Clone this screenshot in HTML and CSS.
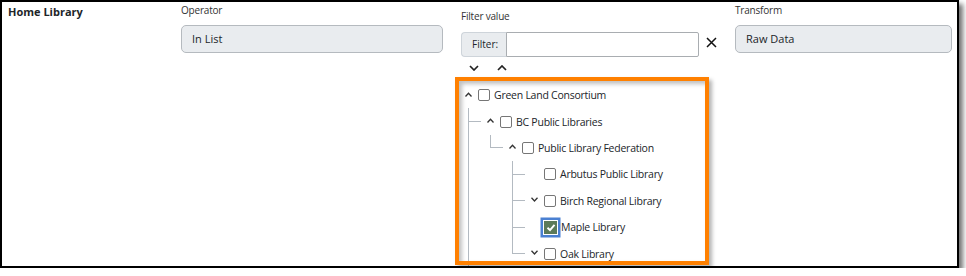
FILE: index.html
```html
<!DOCTYPE html>
<html lang="en">
<head>
  <meta charset="UTF-8">
  <title>Home Library filter</title>
  <link rel="stylesheet" href="styles.css">
</head>
<body>
  <div class="frame">
    <!-- Field name -->
    <div class="field-name">Home Library</div>

    <!-- Operator -->
    <div class="col col-operator">
      <div class="col-label">Operator</div>
      <div class="readonly-box">In List</div>
    </div>

    <!-- Filter value -->
    <div class="col col-filter">
      <div class="col-label">Filter value</div>
      <div class="filter-row">
        <div class="input-group">
          <span class="addon">Filter:</span>
          <input type="text" class="filter-input">
        </div>
        <svg class="clear-icon" width="11" height="11" viewBox="0 0 11 11">
          <path d="M1 1 L10 10 M10 1 L1 10" stroke="#111" stroke-width="1.5" fill="none"/>
        </svg>
      </div>
      <div class="expand-row">
        <svg width="10" height="6" viewBox="0 0 10 6"><polyline points="1,1 5,5 9,1" fill="none" stroke="#222" stroke-width="1.7"/></svg>
        <svg width="10" height="6" viewBox="0 0 10 6"><polyline points="1,5 5,1 9,5" fill="none" stroke="#222" stroke-width="1.7"/></svg>
      </div>

      <ul class="tree">
        <li class="root">
          <div class="node">
            <span class="toggle"><svg width="7" height="5" viewBox="0 0 7 5"><polyline points="0.5,4.5 3.5,1.2 6.5,4.5" fill="none" stroke="#333" stroke-width="1.3"/></svg></span>
            <span class="check"></span>
            <span class="name">Green Land Consortium</span>
          </div>
          <ul class="level-1">
            <li>
              <div class="node">
                <span class="toggle"><svg width="7" height="5" viewBox="0 0 7 5"><polyline points="0.5,4.5 3.5,1.2 6.5,4.5" fill="none" stroke="#333" stroke-width="1.3"/></svg></span>
                <span class="check"></span>
                <span class="name">BC Public Libraries</span>
              </div>
              <ul>
                <li class="last">
                  <div class="node">
                    <span class="toggle"><svg width="7" height="5" viewBox="0 0 7 5"><polyline points="0.5,4.5 3.5,1.2 6.5,4.5" fill="none" stroke="#333" stroke-width="1.3"/></svg></span>
                    <span class="check"></span>
                    <span class="name">Public Library Federation</span>
                  </div>
                  <ul>
                    <li>
                      <div class="node">
                        <span class="toggle"></span>
                        <span class="check"></span>
                        <span class="name">Arbutus Public Library</span>
                      </div>
                    </li>
                    <li>
                      <div class="node">
                        <span class="toggle"><svg width="7" height="5" viewBox="0 0 7 5"><polyline points="0.5,0.8 3.5,4 6.5,0.8" fill="none" stroke="#333" stroke-width="1.3"/></svg></span>
                        <span class="check"></span>
                        <span class="name">Birch Regional Library</span>
                      </div>
                    </li>
                    <li>
                      <div class="node">
                        <span class="toggle"></span>
                        <span class="check checked">
                          <svg width="10" height="9" viewBox="0 0 10 9"><polyline points="1.5,4.8 4,7.2 8.5,1.8" fill="none" stroke="#fff" stroke-width="1.9"/></svg>
                        </span>
                        <span class="name">Maple Library</span>
                      </div>
                    </li>
                    <li class="last">
                      <div class="node">
                        <span class="toggle"><svg width="7" height="5" viewBox="0 0 7 5"><polyline points="0.5,0.8 3.5,4 6.5,0.8" fill="none" stroke="#333" stroke-width="1.3"/></svg></span>
                        <span class="check"></span>
                        <span class="name">Oak Library</span>
                      </div>
                    </li>
                  </ul>
                </li>
              </ul>
            </li>
          </ul>
        </li>
      </ul>
    </div>

    <!-- Transform -->
    <div class="col col-transform">
      <div class="col-label">Transform</div>
      <div class="readonly-box">Raw Data</div>
    </div>

    <!-- Highlight annotation -->
    <div class="highlight"></div>
  </div>
</body>
</html>
```

FILE: styles.css
```css
body {
  margin: 0;
  background-color: #fff;
  font-family: 'Open Sans', 'Noto Sans', sans-serif;
  color: #212529;
}

.frame {
  position: relative;
  box-sizing: border-box;
  width: 959px;
  height: 268px;
  border: 2px solid #000;
  background-color: #fff;
  box-shadow: 4px 4px 5px rgba(0, 0, 0, 0.55);
  display: flex;
  overflow: hidden;
}

.field-name {
  width: 179px;
  flex-shrink: 0;
  box-sizing: border-box;
  padding: 2px 0 0 6px;
  font-size: 11px;
  font-weight: 700;
  line-height: 16px;
}

.col {
  flex-shrink: 0;
  margin-right: 18px;
}

.col-label {
  font-size: 10px;
  letter-spacing: -0.2px;
  line-height: 16px;
  color: #333;
}

.col-operator {
  width: 262px;
}

.col-filter {
  width: 256px;
  padding-top: 6px;
}

.col-transform {
  width: 217px;
}

.readonly-box {
  box-sizing: border-box;
  height: 28px;
  margin-top: 7px;
  padding: 0 10px;
  background-color: #e9ecef;
  border: 1px solid #b5babf;
  border-radius: 5px;
  font-size: 11px;
  line-height: 26px;
}

/* Filter input */
.filter-row {
  display: flex;
  align-items: center;
  margin-top: 8px;
}

.input-group {
  display: flex;
  height: 25px;
  width: 238px;
  flex-shrink: 0;
}

.addon {
  flex-shrink: 0;
  box-sizing: border-box;
  width: 45px;
  padding-left: 10px;
  background-color: #e9ecef;
  border: 1px solid #ced4da;
  border-right: none;
  border-radius: 4px 0 0 4px;
  font-size: 10px;
  line-height: 23px;
}

.filter-input {
  flex: 1;
  min-width: 0;
  box-sizing: border-box;
  height: 25px;
  margin: 0;
  border: 1px solid #a9adb1;
  border-radius: 0 2px 2px 0;
  padding: 0 4px;
  font: inherit;
}

.clear-icon {
  margin: -4px 0 0 7px;
}

.expand-row {
  display: flex;
  gap: 18px;
  height: 10px;
  align-items: center;
  margin: 6px 0 0 8px;
}

/* Tree */
.tree,
.tree ul {
  list-style: none;
  margin: 0;
  padding: 0;
}

.tree {
  margin-top: 9px;
  padding-left: 3px;
  font-size: 10.5px;
  letter-spacing: -0.25px;
}

.tree ul {
  margin-left: 21px;
}

.tree ul.level-1 {
  margin-left: 4px;
}

.tree ul li {
  border-left: 1px solid #b3bac1;
}

.tree ul li.last {
  border-left-color: transparent;
}

.node {
  display: flex;
  align-items: center;
  height: 26.4px;
  white-space: nowrap;
}

.tree ul .node::before {
  content: "";
  width: 12px;
  height: 0;
  border-top: 1px solid #b3bac1;
  margin-right: 5px;
}

.tree ul li.last > .node::before {
  align-self: flex-start;
  height: 12.2px;
  border-top: none;
  border-left: 1px solid #b3bac1;
  border-bottom: 1px solid #b3bac1;
  margin-left: -1px;
}

.toggle {
  width: 9px;
  margin-right: 5px;
  display: flex;
  justify-content: center;
  align-items: center;
  margin-top: -2px;
}

.check {
  box-sizing: border-box;
  width: 12px;
  height: 12px;
  margin-right: 4px;
  border: 1px solid #767676;
  border-radius: 2px;
  background-color: #fff;
  flex-shrink: 0;
}

.check.checked {
  width: 13px;
  height: 13px;
  margin-right: 4px;
  border: none;
  border-radius: 0;
  background-color: #5c7a59;
  box-shadow: 0 0 0 1px #fff, 0 0 0 3.5px #4a80d2;
  display: flex;
  align-items: center;
  justify-content: center;
}

/* Orange annotation box */
.highlight {
  position: absolute;
  left: 453px;
  top: 75px;
  width: 246px;
  height: 180px;
  border: 4px solid #ff8000;
  box-shadow: 3px 3px 4px rgba(0, 0, 0, 0.3), inset 3px 3px 4px rgba(0, 0, 0, 0.25);
}
```
